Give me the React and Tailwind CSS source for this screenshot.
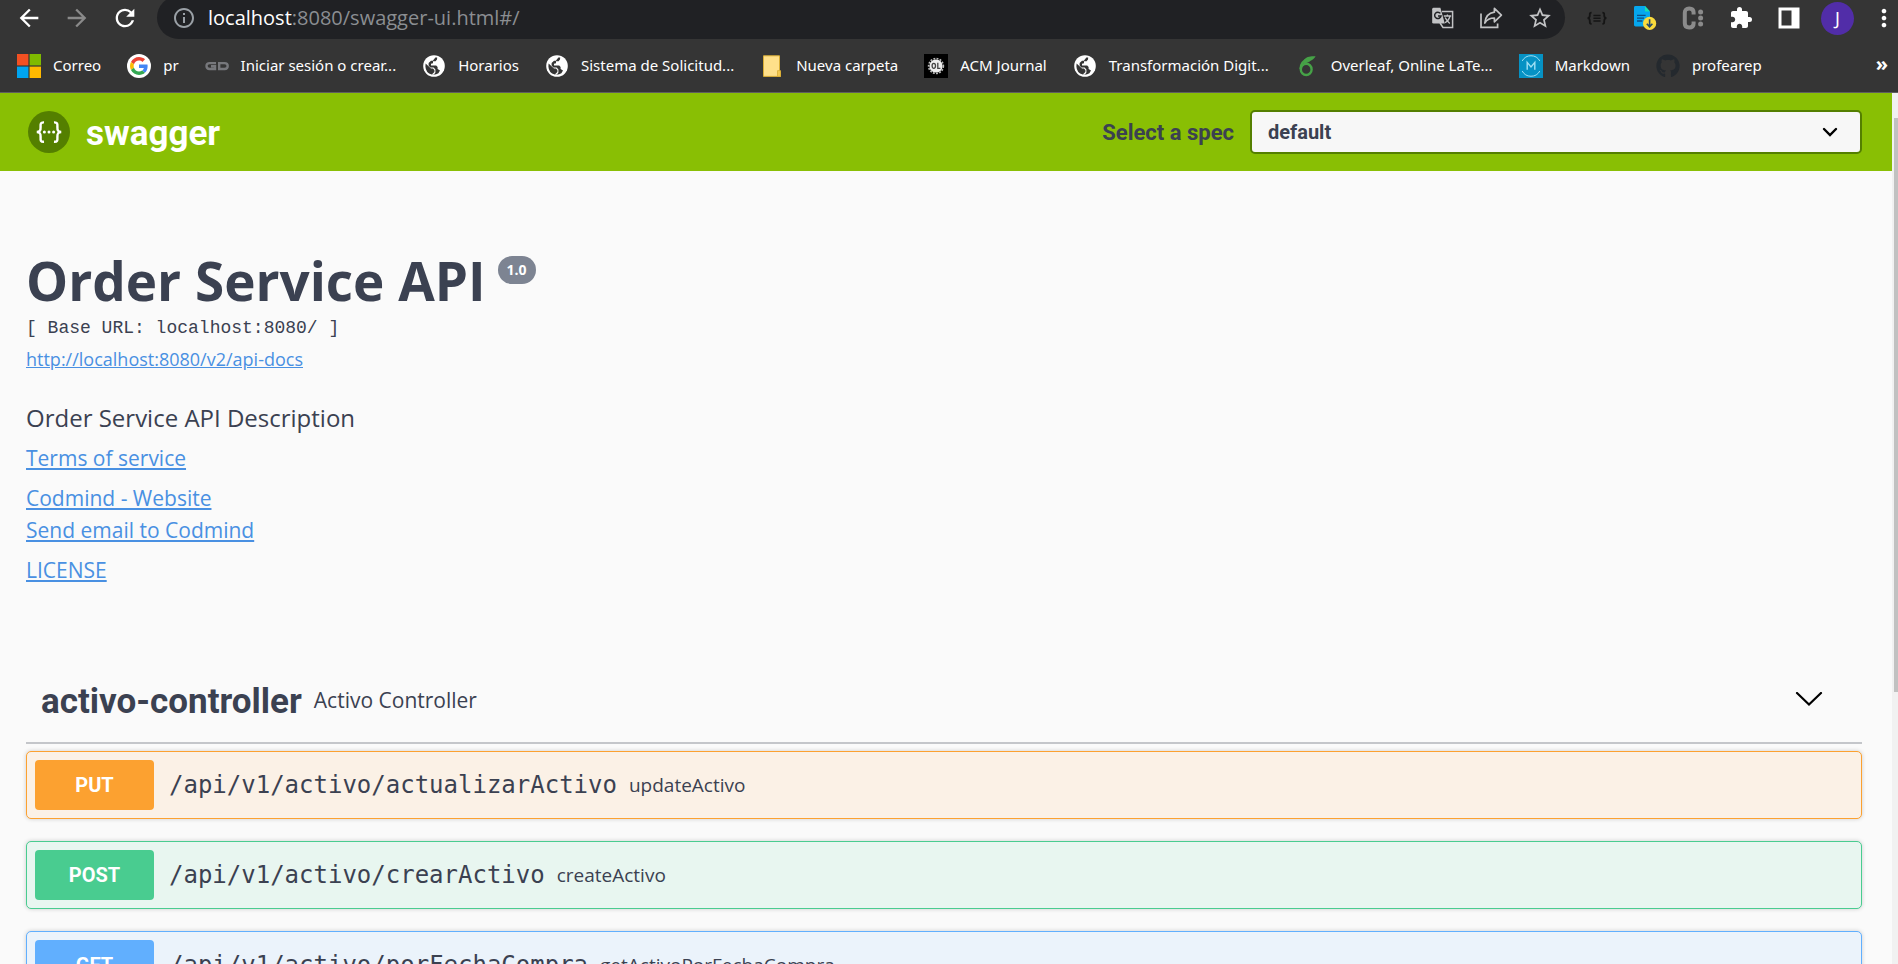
import React from "react";
import { FaGithub } from "react-icons/fa";
import { MdExtension, MdStarBorder, MdRefresh, MdArrowBack, MdArrowForward, MdInfoOutline, MdMoreVert } from "react-icons/md";

const SANS = "font-['Open_Sans',sans-serif]";
const UI = "font-['Noto_Sans','Open_Sans',sans-serif]";
const HEAD = "font-['Roboto','Open_Sans',sans-serif]";

function Microsoft() {
  return (
    <svg viewBox="0 0 24 24" className="size-6">
      <path fill="#f25022" d="M0 0h11.4v11.4H0z" />
      <path fill="#7fba00" d="M12.6 0H24v11.4H12.6z" />
      <path fill="#00a4ef" d="M0 12.6h11.4V24H0z" />
      <path fill="#ffb900" d="M12.6 12.6H24V24H12.6z" />
    </svg>
  );
}

function Google() {
  return (
    <svg viewBox="0 0 24 24" className="size-6">
      <circle cx="12" cy="12" r="12" fill="#fff" />
      <g transform="translate(3 3) scale(.375)">
        <path fill="#EA4335" d="M24 9.5c3.54 0 6.71 1.22 9.21 3.6l6.85-6.85C35.9 2.38 30.47 0 24 0 14.62 0 6.51 5.38 2.56 13.22l7.98 6.19C12.43 13.72 17.74 9.5 24 9.5z" />
        <path fill="#4285F4" d="M46.98 24.55c0-1.57-.15-3.09-.38-4.55H24v9.02h12.94c-.58 2.96-2.26 5.48-4.78 7.18l7.73 6c4.51-4.18 7.09-10.36 7.09-17.65z" />
        <path fill="#FBBC05" d="M10.53 28.59c-.48-1.45-.76-2.99-.76-4.59s.27-3.14.76-4.59l-7.98-6.19C.92 16.46 0 20.12 0 24s.92 7.54 2.56 10.78l7.97-6.19z" />
        <path fill="#34A853" d="M24 48c6.48 0 11.93-2.13 15.89-5.81l-7.73-6c-2.15 1.45-4.92 2.3-8.16 2.3-6.26 0-11.57-4.22-13.47-9.91l-7.98 6.19C6.51 42.62 14.62 48 24 48z" />
      </g>
    </svg>
  );
}

function Gd() {
  return (
    <svg viewBox="0 0 24 24" className="size-6" fill="none" stroke="#77787c" strokeWidth="2.4">
      <path d="M11 9.1H4.6Q1.5 9.1 1.5 12T4.6 15H10V12.2H6" />
      <path d="M14.2 15V9.1H19.6Q22.7 9.1 22.7 12T19.6 15z" />
    </svg>
  );
}

function Globe() {
  return (
    <svg viewBox="0 0 24 24" className="size-6">
      <circle cx="12" cy="12" r="10.8" fill="#fff" />
      <path fill="#353535" d="M13.4 3.4H15.2L15 5.6 13.6 7.2H11V9.2L9 9.8V11.6H14.2L15.6 13V15L18 16.6 16.4 19.2A8.6 8.6 0 0 1 9.8 20.4L12.4 18V16L11 14.6H9L3.6 9.6 3.4 12.4A8.6 8.6 0 0 0 9.8 20.4L12 20.6 13.4 18.6V15.4L11.6 13.4H8.4L6.6 11.4V9L9 6.8H10.8z" />
    </svg>
  );
}

function Folder() {
  return (
    <svg viewBox="0 0 24 24" className="size-6">
      <path fill="#ffe08a" stroke="#d9ad35" strokeWidth="1" d="M3.5 1.8H19.5V17l1 .8V22.4H3.5z" />
      <path fill="#f4c84f" stroke="#d9ad35" strokeWidth=".8" d="M17.5 16.6h3v5.8h-3z" />
    </svg>
  );
}

function Acm() {
  return (
    <svg viewBox="0 0 24 24" className="size-6">
      <path fill="#000" d="M0 0h24v24H0z" />
      <circle cx="12" cy="12" r="6.6" fill="#eee" />
      <circle cx="12" cy="12" r="7.4" fill="none" stroke="#bbb" strokeWidth="1.6" strokeDasharray="1.9 1.3" />
      <g fill="none" stroke="#444" strokeWidth="1.3">
        <ellipse cx="9.8" cy="11.8" rx="1.7" ry="2.5" />
        <path d="M13.8 8.8v5.6h2.6" />
      </g>
    </svg>
  );
}

function Overleaf() {
  return (
    <svg viewBox="0 0 24 24" className="size-6" fill="none" stroke="#46a247">
      <ellipse cx="11.2" cy="15.4" rx="5.4" ry="5.6" strokeWidth="2.4" />
      <path strokeWidth="2.4" d="M5.6 15C5.4 10.4 8.4 6.4 13 5" />
      <path fill="#46a247" stroke="none" d="M9 6C11.4 2.4 15 2 20.6 2.2c-1.2 2.2-3 3.6-5 4.6-1.4 1.6-4.2 1.6-7 4z" />
    </svg>
  );
}

function MarkdownIcon() {
  return (
    <svg viewBox="0 0 24 24" className="size-6">
      <path fill="#0692c4" d="M0 0h24v24H0z" />
      <g fill="none" stroke="#9fe0f5">
        <path strokeWidth="1" d="M3.2 7a10 10 0 0 1 17.6 0M3.2 17a10 10 0 0 0 17.6 0" />
        <path strokeWidth="1.4" d="M8.2 15.8V8.4L12 13l3.8-4.6v7.4" />
      </g>
    </svg>
  );
}

const bookmarks = [
  ["Correo", <Microsoft />],
  ["pr", <Google />],
  ["Iniciar sesión o crear...", <Gd />],
  ["Horarios", <Globe />],
  ["Sistema de Solicitud...", <Globe />],
  ["Nueva carpeta", <Folder />],
  ["ACM Journal", <Acm />],
  ["Transformación Digit...", <Globe />],
  ["Overleaf, Online LaTe...", <Overleaf />],
  ["Markdown", <MarkdownIcon />],
  ["profearep", <FaGithub className="size-6 text-[#24292e]" />],
];

function Translate() {
  return (
    <svg viewBox="0 0 24 24" className="size-6">
      <path fill="none" stroke="#c2c3c5" strokeWidth="1.5" d="M11 5.6H21.6V21.4H12L9 17" />
      <path fill="#c2c3c5" d="M2.6 1.8H9.4L13.8 17.6H2.6Q1.2 17.6 1.2 16.2V3.2Q1.2 1.8 2.6 1.8z" />
      <path fill="none" stroke="#202124" strokeWidth="1.5" d="M9.4 7.4A3.2 3.2 0 1 0 10 10H7" />
      <path fill="none" stroke="#c2c3c5" strokeWidth="1.3" d="M12.8 10h7.4M16.4 8.4V10M19 10c-.6 3-2.6 5.2-5 6.8M14.2 11.6c.8 2 2.4 4 4.6 5.8" />
    </svg>
  );
}

function Share() {
  return (
    <svg viewBox="0 0 24 24" className="size-6" fill="none" stroke="#c2c3c5" strokeWidth="1.7">
      <path d="M2 7.6V21.4H18.6V17.4" />
      <path strokeLinejoin="round" d="M15.4 2.4 22.4 9.2 15.4 15.8V12C11 12 8 13.4 5.8 17 6.4 11 9.4 7 15.4 6.2z" />
    </svg>
  );
}

function BracesIcon() {
  return (
    <svg viewBox="0 0 24 24" className="size-6" fill="none" stroke="#151515" strokeWidth="1.8">
      <path d="M6.6 6.6C4.6 6.6 4.8 7.6 4.8 9.4 4.8 11.4 4.4 12 2.6 12.2 4.4 12.4 4.8 13 4.8 15 4.8 16.8 4.6 17.8 6.6 17.8M17.4 6.6C19.4 6.6 19.2 7.6 19.2 9.4 19.2 11.4 19.6 12 21.4 12.2 19.6 12.4 19.2 13 19.2 15 19.2 16.8 19.4 17.8 17.4 17.8" />
      <path strokeWidth="1.5" d="M8.4 9.4h7.2M8.4 12.2h7.2M8.4 15h7.2" />
    </svg>
  );
}

function DocDownload() {
  return (
    <svg viewBox="0 0 24 24" className="size-6">
      <path fill="#06a7ee" d="M2.6 0H12l5 5.6V20.4H2.6Q1 20.4 1 19V1.4Q1 0 2.6 0z" />
      <path fill="#18e0b0" d="M12 0 17 5.6H12z" />
      <path stroke="#0c4f86" strokeWidth="1.3" d="M4 9.4h8.6M4 12.2h7M4 15h5.4" />
      <circle cx="16.6" cy="17.4" r="6.6" fill="#fadb3c" />
      <path fill="none" stroke="#274a6b" strokeWidth="1.6" d="M16.6 13.2v7.4M13.8 17.8l2.8 3 2.8-3" />
    </svg>
  );
}

function CDots() {
  return (
    <svg viewBox="0 0 24 24" className="size-6">
      <path fill="none" stroke="#8b8b8b" strokeWidth="4" d="M12.6 8.6V6.6Q12.6 2.6 8.2 2.6T3.8 6.8V17.2Q3.8 21.4 8.2 21.4T12.6 17.4V15.4" />
      <g fill="#8b8b8b">
        <circle cx="19.6" cy="6" r="2.5" />
        <circle cx="19.6" cy="12" r="2.5" />
        <circle cx="19.6" cy="18" r="2.5" />
      </g>
    </svg>
  );
}

function SidePanel() {
  return (
    <svg viewBox="0 0 24 24" className="size-6">
      <path fill="#fff" fillRule="evenodd" d="M1.5 1.5h21v21h-21zM4.5 4.5v15h10v-15z" />
    </svg>
  );
}

function SwaggerMark() {
  return (
    <svg viewBox="0 0 42 42" className="size-[42px]">
      <circle cx="21" cy="21" r="21" fill="#547f00" />
      <g fill="none" stroke="#fff" strokeWidth="2.4">
        <path d="M16 11.4C12.6 11.2 12.4 12.6 12.6 16 12.8 19.4 12 20.8 8.8 21 12 21.2 12.8 22.6 12.6 26 12.4 29.6 12.6 31 16 30.8" />
        <path d="M26 11.4C29.4 11.2 29.6 12.6 29.4 16 29.2 19.4 30 20.8 33.2 21 30 21.2 29.2 22.6 29.4 26 29.6 29.6 29.4 31 26 30.8" />
      </g>
      <g fill="#fff">
        <circle cx="16.4" cy="21" r="1.5" />
        <circle cx="21" cy="21" r="1.5" />
        <circle cx="25.6" cy="21" r="1.5" />
      </g>
    </svg>
  );
}

function BrowserChrome() {
  return (
    <header className={"shrink-0 overflow-hidden border-b border-[#5f5f5f] bg-[#353535] text-white " + UI}>
      <div className="flex h-[39px] items-start">
        <div className="flex h-9 w-[157px] shrink-0 items-center gap-5 pl-[15px]">
          <button aria-label="Back"><MdArrowBack className="size-7" /></button>
          <button aria-label="Forward"><MdArrowForward className="size-7 text-[#8a8a8a]" /></button>
          <button aria-label="Reload"><MdRefresh className="size-7" /></button>
        </div>
        <div className="-mt-1 flex h-[43px] grow items-center rounded-full bg-[#202124] pl-[15px] pr-3 text-[#c2c3c5]">
          <MdInfoOutline className="size-6 shrink-0 text-[#9aa0a6]" />
          <div className={"grow pl-3 text-xl text-[#8b8e92] " + SANS}>
            <span className="text-white">localhost</span>:8080/swagger-ui.html#/
          </div>
          <div className="flex items-center gap-6">
            <button aria-label="Translate"><Translate /></button>
            <button aria-label="Share"><Share /></button>
            <button aria-label="Bookmark"><MdStarBorder className="size-[26px]" /></button>
          </div>
        </div>
        <div className="flex h-9 shrink-0 items-center gap-5 pl-5">
          <div className="flex items-center gap-6">
            <button aria-label="JSON viewer"><BracesIcon /></button>
            <button aria-label="Downloader"><DocDownload /></button>
            <button aria-label="Clockify"><CDots /></button>
            <button aria-label="Extensions"><MdExtension className="size-6" /></button>
            <button aria-label="Side panel"><SidePanel /></button>
          </div>
          <div className="flex items-center gap-4">
            <button aria-label="Profile" className="size-[33px] rounded-full bg-[#512da8] text-lg">J</button>
            <button aria-label="Menu"><MdMoreVert className="size-7" /></button>
          </div>
        </div>
      </div>
      <nav className="flex h-[53px] items-center gap-[26px] pl-[17px] pr-2.5 text-[15px]">
        {bookmarks.map(([label, icon], i) => (
          <a key={i} href="#" className="flex shrink-0 items-center gap-3">
            {icon}
            {label}
          </a>
        ))}
        <button aria-label="More bookmarks" className="ml-auto pb-1 text-xl font-bold">»</button>
      </nav>
    </header>
  );
}

function Topbar() {
  return (
    <div className={"flex h-[78px] shrink-0 items-center justify-between bg-[#89bf04] pl-7 pr-[30px] " + HEAD}>
      <a href="#" className="flex items-center gap-4 text-[35px] font-bold text-white">
        <SwaggerMark />
        <span className="pt-1">swagger</span>
      </a>
      <label className="flex items-center gap-4 text-[22px] font-bold text-[#3b4151]">
        Select a spec
        <span className="grid items-center">
          <select className="col-start-1 row-start-1 h-11 w-[612px] appearance-none rounded-[5px] border-2 border-[#547f00] bg-[#f7f7f7] px-4 text-xl font-bold">
            <option>default</option>
          </select>
          <svg viewBox="0 0 16 10" className="pointer-events-none col-start-1 row-start-1 mr-6 h-2.5 w-4 justify-self-end" fill="none" stroke="#000" strokeWidth="2.4" strokeLinecap="round">
            <path d="M2 2l6 6 6-6" />
          </svg>
        </span>
      </label>
    </div>
  );
}

const link = "w-fit text-[#4990e2] underline";

const operations = [
  { method: "PUT", path: "/api/v1/activo/actualizarActivo", summary: "updateActivo", box: "border-[#fca130] bg-[#fbf1e6]", tag: "bg-[#fca130]" },
  { method: "POST", path: "/api/v1/activo/crearActivo", summary: "createActivo", box: "border-[#49cc90] bg-[#e8f6f0]", tag: "bg-[#49cc90]" },
  { method: "GET", path: "/api/v1/activo/porFechaCompra", summary: "getActivoPorFechaCompra", box: "border-[#61affe] bg-[#ebf3fb]", tag: "bg-[#61affe]" },
];

function Info() {
  return (
    <section className="flex flex-col">
      <div className="flex items-start gap-3">
        <h1 className="text-[53px] font-bold leading-[64px]">Order Service API</h1>
        <span className="mt-[7px] rounded-full bg-[#7d8492] px-[9px] text-sm font-bold leading-7 text-white">1.0</span>
      </div>
      <div className="font-['Liberation_Mono',monospace] text-lg leading-[30px]">[ Base URL: localhost:8080/ ]</div>
      <a href="#" className={link + " text-lg leading-8"}>http://localhost:8080/v2/api-docs</a>
      <p className="mt-[27px] text-2xl leading-8">Order Service API Description</p>
      <div className="mt-2 flex flex-col gap-2 text-[21px] leading-8">
        <a href="#" className={link}>Terms of service</a>
        <div className="flex flex-col">
          <a href="#" className={link}>Codmind - Website</a>
          <a href="#" className={link}>Send email to Codmind</a>
        </div>
        <a href="#" className={link}>LICENSE</a>
      </div>
    </section>
  );
}

export default function App() {
  return (
    <div className={"flex h-screen flex-col overflow-hidden bg-[#fafafa] text-[#3b4151] " + SANS}>
      <BrowserChrome />
      <div className="flex min-h-0 grow">
        <main className="flex min-w-0 grow flex-col overflow-hidden">
          <Topbar />
          <div className="flex flex-col pl-[26px] pr-[30px] pt-[78px]">
            <Info />
            <section className="mt-[72px]">
              <h2 className="flex h-[86px] items-center gap-3 border-b-2 border-[#c4c6ca] pl-[15px] pr-[39px]">
                <span className={"pt-1 text-[35px] font-bold " + HEAD}>activo-controller</span>
                <span className="grow pt-0.5 text-[21px] font-normal">Activo Controller</span>
                <button aria-label="Collapse">
                  <svg viewBox="0 0 28 16" className="h-4 w-7" fill="none" stroke="#000" strokeWidth="2.2" strokeLinecap="round">
                    <path d="M2 1l12 11.5L26 1" />
                  </svg>
                </button>
              </h2>
              <div className="mt-[7px] flex flex-col gap-[22px]">
                {operations.map((op) => (
                  <div key={op.path} className={"flex h-[68px] shrink-0 items-center rounded-[5px] border pl-2 shadow-[0_0_4px_rgba(0,0,0,0.19)] " + op.box}>
                    <button className={"h-[50px] w-[119px] rounded text-xl font-bold text-white " + HEAD + " " + op.tag}>{op.method}</button>
                    <span className="pl-[15px] font-['DejaVu_Sans_Mono',monospace] text-2xl">{op.path}</span>
                    <span className="pl-3 text-[19px]">{op.summary}</span>
                  </div>
                ))}
              </div>
            </section>
          </div>
        </main>
        <div className="flex w-1.5 shrink-0 justify-end bg-[#f1f1f1] pt-[25px]">
          <div className="h-[574px] w-1 bg-[#c1c1c1]" />
        </div>
      </div>
    </div>
  );
}
